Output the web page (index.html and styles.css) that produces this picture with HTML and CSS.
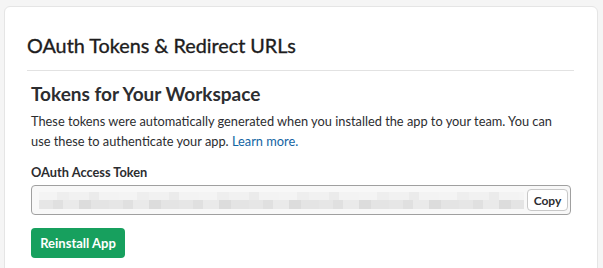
FILE: index.html
```html
<!DOCTYPE html>
<html>
<head>
<meta charset="utf-8">
<link rel="stylesheet" href="styles.css">
</head>
<body>
<div class="card">
  <h2 class="title">OAuth Tokens &amp; Redirect URLs</h2>
  <div class="section">
    <h3 class="subtitle">Tokens for Your Workspace</h3>
    <p class="desc">These tokens were automatically generated when you installed the app to your team. You can use these to authenticate your app. <a href="#" class="link">Learn more.</a></p>
    <div class="label">OAuth Access Token</div>
    <div class="token-field">
      <div class="token-blur">
        <div class="blur-row blur-top"></div>
        <div class="blur-row blur-bottom"></div>
      </div>
      <button class="copy-btn">Copy</button>
    </div>
    <button class="primary-btn">Reinstall App</button>
  </div>
</div>
</body>
</html>
```
FILE: styles.css
```css
html, body {
  margin: 0;
  padding: 0;
}
body {
  background: #f5f5f5;
  font-family: Lato, "Noto Sans", sans-serif;
  color: #2c2d30;
  padding: 6px 5px 0 4px;
  height: 268px;
  box-sizing: border-box;
  overflow: hidden;
}
.card {
  background: #fff;
  border: 1px solid #e5e5e5;
  border-radius: 6px;
  height: 300px;
  padding: 0 23px 0 22px;
}
.title {
  margin: 26px 0 0 0;
  font-size: 19.8px;
  font-weight: 400;
  line-height: 24px;
  color: #1d1c1d;
  -webkit-text-stroke: 0.35px #1d1c1d;
  padding-bottom: 13px;
  border-bottom: 1px solid #e2e2e2;
}
.section {
  padding: 0 3px 0 4px;
}
.subtitle {
  margin: 11px 0 0 0;
  font-size: 19px;
  line-height: 24px;
  font-weight: 700;
  color: #2c2d30;
}
.desc {
  margin: 5px 0 0 0;
  font-size: 12.8px;
  line-height: 20px;
  color: #2c2d30;
}
.link {
  color: #1264a3;
  text-decoration: none;
}
.label {
  margin-top: 12px;
  font-size: 12.8px;
  font-weight: 700;
  line-height: 18px;
}
.token-field {
  margin-top: 4px;
  height: 30px;
  box-sizing: border-box;
  border: 1px solid #a0a0a0;
  border-radius: 4px;
  background: #f8f8f8;
  display: flex;
  align-items: center;
  padding: 0 2px 0 7px;
  gap: 3px;
}
.token-blur {
  flex: 1;
  display: flex;
  flex-direction: column;
  height: 17px;
  overflow: hidden;
}
.blur-row {
  flex: 1;
}
.blur-top {
  background: repeating-linear-gradient(90deg, #f4f4f4 0 18px, #eeeeee 18px 30px, #f1f1f1 30px 50px, #ebebeb 50px 60px, #f3f3f3 60px 80px);
}
.blur-bottom {
  background: repeating-linear-gradient(90deg, #e6e6e6 0 14px, #e0e0e0 14px 24px, #eaeaea 24px 40px, #dcdcdc 40px 52px, #e4e4e4 52px 70px);
}
.copy-btn {
  font-family: Lato, "Noto Sans", sans-serif;
  font-size: 12px;
  font-weight: 700;
  color: #2c2d30;
  background: #fff;
  border: 1px solid #c8c8c8;
  border-radius: 4px;
  height: 22px;
  padding: 0;
  width: 41px;
}
.primary-btn {
  margin-top: 13px;
  font-family: Lato, "Noto Sans", sans-serif;
  font-size: 13px;
  font-weight: 700;
  color: #fff;
  background: #17a05e;
  border: none;
  border-radius: 4px;
  height: 30px;
  width: 94px;
  padding: 0;
}
```
